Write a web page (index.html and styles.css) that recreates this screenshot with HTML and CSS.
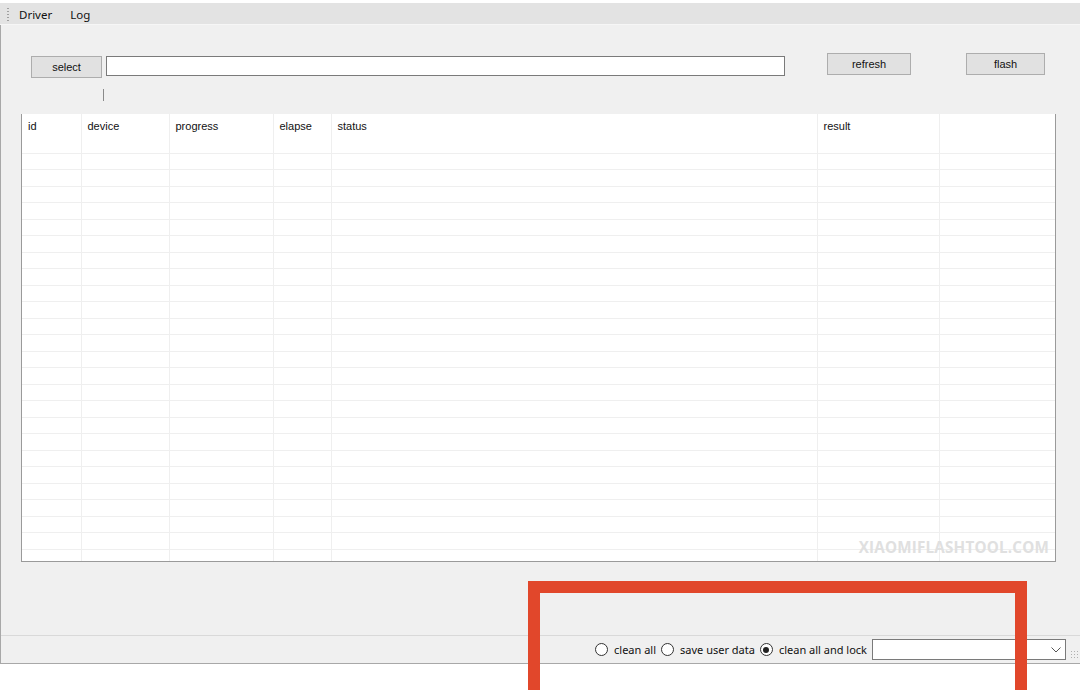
FILE: index.html
```html
<!DOCTYPE html>
<html>
<head>
<meta charset="utf-8">
<link rel="stylesheet" href="styles.css">
</head>
<body>
<div class="window">
  <div class="menubar">
    <span class="grip"></span>
    <span class="menu-item">Driver</span>
    <span class="menu-item">Log</span>
  </div>
  <div class="toolbar">
    <button class="btn btn-select">select</button>
    <input class="path" type="text">
    <button class="btn btn-refresh">refresh</button>
    <button class="btn btn-flash">flash</button>
  </div>
  <div class="caret-row"><span class="caret"></span></div>
  <div class="grid-wrap">
    <table class="grid">
      <colgroup>
        <col class="c-id"><col class="c-device"><col class="c-progress"><col class="c-elapse"><col class="c-status"><col class="c-result"><col>
      </colgroup>
      <thead>
        <tr><th>id</th><th>device</th><th>progress</th><th>elapse</th><th>status</th><th>result</th><th></th></tr>
      </thead>
      <tbody id="rows"></tbody>
    </table>
    <div class="watermark">XIAOMIFLASHTOOL.COM</div>
  </div>
  <div class="spacer"></div>
  <div class="statusbar">
    <label class="radio"><span class="dot"></span>clean all</label>
    <label class="radio"><span class="dot"></span>save user data</label>
    <label class="radio"><span class="dot checked"></span>clean all and lock</label>
    <div class="combo">
      <svg width="10" height="6" viewBox="0 0 10 6"><path d="M0.5 0.5 L5 5 L9.5 0.5" fill="none" stroke="#555" stroke-width="1"/></svg>
    </div>
    <span class="sizegrip"></span>
  </div>
</div>
<div class="annotation"></div>
<script>
  var tb = document.getElementById('rows');
  var html = '';
  for (var i = 0; i < 25; i++) {
    html += '<tr><td></td><td></td><td></td><td></td><td></td><td></td><td></td></tr>';
  }
  tb.innerHTML = html;
</script>
</body>
</html>
```
FILE: styles.css
```css
html, body {
  margin: 0;
  padding: 0;
  background: #ffffff;
  width: 1080px;
  height: 690px;
  overflow: hidden;
  position: relative;
}

.window {
  box-sizing: border-box;
  width: 1080px;
  height: 661px;
  margin-top: 3px;
  background: #f0f0f0;
  border-left: 1px solid #a8a8a8;
  border-bottom: 1px solid #a8a8a8;
  display: flex;
  flex-direction: column;
  font-family: "Liberation Sans", Arial, sans-serif;
  color: #000;
}

.menubar {
  height: 22px;
  background: #e3e3e3;
  border-bottom: 1px solid #f6f6f6;
  display: flex;
  align-items: center;
  font-family: "Noto Sans", "Open Sans", sans-serif;
  font-size: 11.5px;
  margin-left: -1px;
  padding-top: 1px;
  box-sizing: border-box;
}

.grip {
  width: 2px;
  height: 15px;
  margin-left: 7px;
  margin-right: 10px;
  background-image: radial-gradient(circle, #a0a0a0 0.8px, transparent 1px);
  background-size: 2px 3px;
}

.menu-item {
  margin-right: 18px;
  color: #111;
}

.toolbar {
  display: flex;
  align-items: flex-start;
  height: 52px;
}

.btn {
  box-sizing: border-box;
  height: 22px;
  background: #e1e1e1;
  border: 1px solid #adadad;
  font-family: "Liberation Sans", Arial, sans-serif;
  font-size: 11px;
  color: #111;
  padding: 0;
}

.btn-select {
  margin-top: 31px;
  margin-left: 30px;
  width: 71px;
}

.path {
  box-sizing: border-box;
  margin-top: 31px;
  margin-left: 4px;
  width: 679px;
  height: 20px;
  border: 1px solid #7a7a7a;
  background: #fff;
  padding: 0;
}

.btn-refresh {
  margin-top: 28px;
  margin-left: 42px;
  width: 84px;
}

.btn-flash {
  margin-top: 28px;
  margin-left: 55px;
  width: 79px;
}

.caret-row {
  height: 37px;
  display: flex;
  align-items: flex-start;
}

.caret {
  width: 1px;
  height: 12px;
  margin-top: 12px;
  margin-left: 102px;
  background: #8a8a8a;
}

.grid-wrap {
  position: relative;
  box-sizing: border-box;
  width: 1035px;
  height: 448px;
  margin-left: 20px;
  background: #fff;
  border-left: 1px solid #9a9a9a;
  border-right: 1px solid #9a9a9a;
  border-bottom: 1px solid #9a9a9a;
  overflow: hidden;
}

.grid {
  border-collapse: collapse;
  width: 100%;
  table-layout: fixed;
  font-size: 11px;
}

.c-id { width: 59px; }
.c-device { width: 88px; }
.c-progress { width: 104px; }
.c-elapse { width: 58px; }
.c-status { width: 486px; }
.c-result { width: 122px; }

.grid th {
  height: 39px;
  box-sizing: border-box;
  padding: 6px 0 0 6px;
  text-align: left;
  vertical-align: top;
  font-weight: normal;
  border-left: 1px solid #efefef;
  border-bottom: 1px solid #efefef;
  color: #111;
}

.grid th:first-child,
.grid td:first-child {
  border-left: none;
}

.grid td {
  height: 16.5px;
  box-sizing: border-box;
  padding: 0;
  border-left: 1px solid #efefef;
  border-bottom: 1px solid #efefef;
}

.watermark {
  position: absolute;
  right: 6px;
  bottom: 4px;
  font-family: "Open Sans", "Noto Sans", sans-serif;
  font-weight: 700;
  font-size: 15.2px;
  letter-spacing: 0.2px;
  color: #e0e0e0;
}

.spacer {
  flex: 1;
}

.statusbar {
  box-sizing: border-box;
  height: 28px;
  border-top: 1px solid #d9d9d9;
  display: flex;
  align-items: center;
  justify-content: flex-end;
  font-family: "Noto Sans", "Open Sans", sans-serif;
  font-size: 11px;
  color: #111;
  padding-right: 2px;
}

.radio {
  display: flex;
  align-items: center;
  margin-right: 5px;
}

.dot {
  box-sizing: border-box;
  width: 13px;
  height: 13px;
  border: 1px solid #333;
  border-radius: 50%;
  background: #fff;
  margin-right: 6px;
  position: relative;
}

.dot.checked::after {
  content: "";
  position: absolute;
  left: 2.5px;
  top: 2.5px;
  width: 6px;
  height: 6px;
  border-radius: 50%;
  background: #222;
}

.combo {
  box-sizing: border-box;
  width: 194px;
  height: 21px;
  background: #fff;
  border: 1px solid #7a7a7a;
  display: flex;
  align-items: center;
  justify-content: flex-end;
  padding-right: 4px;
}

.sizegrip {
  width: 8px;
  height: 8px;
  margin-left: 4px;
  margin-top: 8px;
  background-image: radial-gradient(circle, #b0b0b0 0.8px, transparent 1px);
  background-size: 3px 3px;
}

.annotation {
  position: absolute;
  left: 528px;
  top: 581px;
  width: 499px;
  height: 130px;
  box-sizing: border-box;
  border: 12px solid #e1472b;
  pointer-events: none;
}
```
